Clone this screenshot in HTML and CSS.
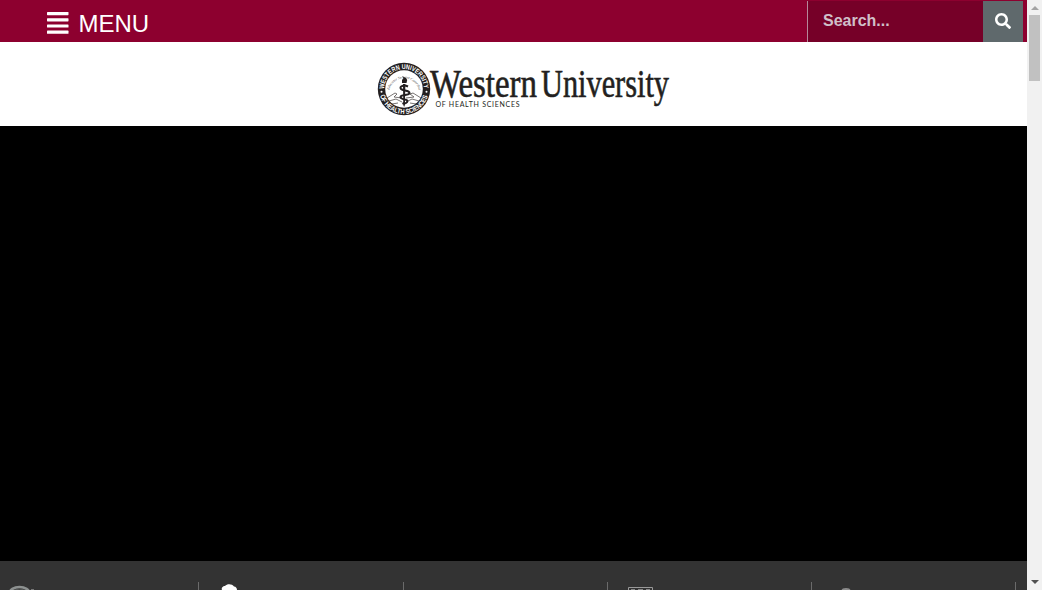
FILE: index.html
```html
<!DOCTYPE html>
<html lang="en">
<head>
<meta charset="utf-8">
<title>Western University of Health Sciences</title>
<link rel="stylesheet" href="styles.css">
</head>
<body>
<div class="page">
  <header class="topbar">
    <a class="menu"><svg class="menu-icon" viewBox="0 0 22 22"><g><rect y="0" width="21.500" height="3.200" rx=".6"/><rect y="6.200" width="21.500" height="3.200" rx=".6"/><rect y="12.400" width="21.500" height="3.200" rx=".6"/><rect y="18.600" width="21.500" height="3.200" rx=".6"/></g></svg><span>MENU</span></a>
    <form class="search">
      <span class="field">Search...</span>
      <span class="go"><svg viewBox="0 0 512 512"><path d="M505 442.700 405.300 343c-4.500-4.500-10.600-7-17-7H372c27.600-35.300 44-79.700 44-128C416 93.100 322.900 0 208 0S0 93.100 0 208s93.100 208 208 208c48.300 0 92.700-16.400 128-44v16.300c0 6.400 2.500 12.500 7 17l99.700 99.700c9.400 9.400 24.600 9.400 33.900 0l28.300-28.300c9.400-9.400 9.400-24.600.1-34zM208 336c-70.700 0-128-57.200-128-128 0-70.700 57.200-128 128-128 70.700 0 128 57.200 128 128 0 70.700-57.200 128-128 128z"/></svg></span>
    </form>
  </header>
  <div class="brand">
    <svg class="logo" viewBox="376 60 296 58">
      <defs>
        <path id="arcTop" d="M384.100 89A19.900 19.900 0 0 1 423.900 89"/>
        <path id="arcBottom" d="M379.900 95A24.800 24.800 0 0 0 428.100 95"/>
        <path id="arcMotto" d="M389 91A15.200 15.200 0 0 1 419 91"/>
      </defs>
      <circle cx="404" cy="89" r="26.200" fill="#231f20"/>
      <circle cx="404" cy="89" r="18.800" fill="#fff"/>
      <text class="ring"><textPath href="#arcTop" textLength="61.500" lengthAdjust="spacingAndGlyphs">WESTERN UNIVERSITY</textPath></text>
      <text class="ring"><textPath href="#arcBottom" startOffset=".5" textLength="64" lengthAdjust="spacingAndGlyphs">OF HEALTH SCIENCES</textPath></text>
      <circle cx="381.500" cy="91.800" r="1" fill="#fff"/><circle cx="426.500" cy="91.800" r="1" fill="#fff"/>
      <text class="motto"><textPath href="#arcMotto" startOffset="1" textLength="44" lengthAdjust="spacingAndGlyphs">Educator Servant Contributor</textPath></text>
      <g fill="none" stroke="#55514f" stroke-width=".8">
        <path d="m387 98 8-5 2 1-3 3 8 1M421 98l-8-5-3 1 4 3-8 1M389 101l7-2 6 3M419 101l-7-2-6 3M392 104l6-1M416 104l-6-1"/>
      </g>
      <path d="M403 84h2.400l-.5 21-.8 2-.8-2z" fill="#231f20"/>
      <path d="M402 83v-3l1.500-2-1.500-2 4 2 1.200 2-.7 3z" fill="#231f20"/>
      <path d="M408 86.500c-5-2.500-9 .5-7 2.500s8.500 1 8.500 4-9 1-9 4 7 2 7 4-3 3-5 2" fill="none" stroke="#231f20" stroke-width="2"/>
      <g fill="#231f20">
        <text class="word" x="430" y="97" textLength="107" lengthAdjust="spacingAndGlyphs">Western</text>
        <text class="word" x="541" y="97" textLength="128" lengthAdjust="spacingAndGlyphs">University</text>
        <text class="sub" x="435.500" y="107.300" textLength="84" lengthAdjust="spacing">OF HEALTH SCIENCES</text>
      </g>
    </svg>
  </div>
  <main class="hero"></main>
  <nav class="links">
    <div class="cell"><svg viewBox="0 0 40 8"><ellipse cx="19.500" cy="11.500" rx="10" ry="6.500" fill="none" stroke="#8d9190" stroke-width="2.500"/><ellipse cx="19.500" cy="11.500" rx="7" ry="4.500" fill="none" stroke="#5c5f5e"/><path d="M31 7h3v1h-3z" fill="#777"/></svg></div>
    <div class="cell"><svg viewBox="0 0 40 8"><path d="M23 8c-1-2 1-4 3-4 2-2.500 7-2.500 9 .5 2 0 3 2 3 3.500z" fill="#fff"/></svg></div>
    <div class="cell"></div>
    <div class="cell"><svg viewBox="0 0 40 8"><path d="M20.500 8V5.500h24V8" fill="none" stroke="#999"/><path d="M23 7h4v1h-4zm7 0h5v1h-5zm8 0h4v1h-4z" fill="#888"/></svg></div>
    <div class="cell"><svg viewBox="0 0 40 8"><ellipse cx="34" cy="8.500" rx="4.500" ry="2.500" fill="#8b8b8b"/></svg></div>
  </nav>
</div>
<aside class="scrollbar"><i class="up"></i><i class="thumb"></i><i class="down"></i></aside>
</body>
</html>
```

FILE: styles.css
```css
* { box-sizing: border-box; }
body { margin: 0; height: 590px; overflow: hidden; display: flex; font-family: "Liberation Sans", Arial, sans-serif; background: #fff; }
.page { width: 1027px; height: 590px; display: flex; flex-direction: column; }
.topbar { height: 42px; background: #8d002f; display: flex; justify-content: space-between; padding: 1px 4px 0 47px; }
.menu { display: flex; gap: 9.5px; color: #fff; font-size: 24px; line-height: 27px; padding-top: 9px; }
.menu-icon { width: 22px; height: 22px; margin-top: 2px; fill: #fff; }
.search { display: flex; width: 216px; height: 41px; }
.field { flex: 1; background: #760028; border-left: 1px solid #b7889a; color: #d0bfc8; font-weight: bold; font-size: 16px; line-height: 39px; padding-left: 15px; }
.go { width: 40px; background: #5f696c; display: flex; align-items: center; justify-content: center; }
.go svg { width: 16px; height: 16px; fill: #fff; margin-bottom: 1px; }
.brand { height: 84px; background: #fff; padding: 18px 0 0 376px; }
.logo { display: block; width: 296px; height: 58px; overflow: visible; }
.word { font-family: "Liberation Serif", "Times New Roman", serif; font-size: 39.5px; stroke: #231f20; stroke-width: .6px; }
.sub { font-family: Lato, sans-serif; font-size: 7px; }
.ring { font-family: "Liberation Sans", Arial, sans-serif; font-weight: bold; font-size: 7px; fill: #fff; }
.motto { font-family: "Liberation Serif", serif; font-style: italic; font-size: 3.5px; fill: #444; }
.hero { height: 435px; background: #000; }
.links { height: 29px; background: #333; padding-top: 21px; display: grid; grid-template-columns: 199px 205px 204px 204px 204px; }
.cell { border-right: 1px solid #6b6b6b; height: 8px; }
.cell svg { display: block; width: 40px; height: 8px; overflow: visible; }
.scrollbar { width: 15px; height: 590px; background: #f1f1f1; display: flex; flex-direction: column; align-items: center; }
.up, .down { width: 0; height: 0; border: 4px solid transparent; }
.up { border-top: 0; border-bottom-color: #a3a3a3; margin-top: 6px; }
.thumb { width: 11px; height: 66px; margin-top: 5px; background: #c1c1c1; }
.down { border-bottom: 0; border-top-color: #505050; margin-top: auto; margin-bottom: 6px; }
```
